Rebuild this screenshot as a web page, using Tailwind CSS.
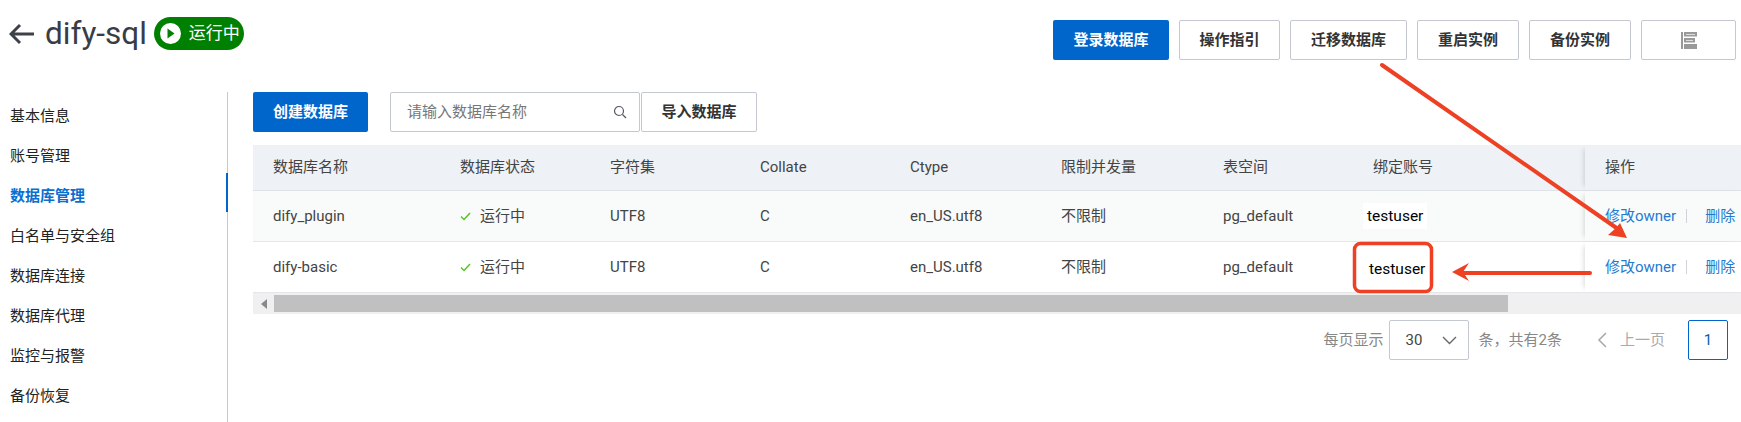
<!DOCTYPE html>
<html lang="zh-CN">
<head>
    <meta charset="UTF-8">
    <title>dify-sql</title>
    <script src="https://cdn.jsdelivr.net/npm/@tailwindcss/browser@4"></script>
</head>
<body class="relative bg-white h-[422px] overflow-hidden text-[15px] text-[#333] font-['Roboto','Noto_Sans_CJK_SC',sans-serif]">
    <!-- Header -->
    <header class="flex justify-between h-[92px] pl-[9px] pr-[5px]">
        <div class="flex items-start pt-[17px]">
            <svg class="w-[26px] h-[22px] mt-[6px]" viewBox="0 0 26 22" fill="none" stroke="#3d4149" stroke-width="3"><path d="M25 11H2M11 2l-9 9 9 9"/></svg>
            <h1 class="ml-[10px] text-[31.5px] leading-[33px] text-[#373d46]">dify-sql</h1>
            <span class="ml-[7px] flex items-center w-[90px] h-[33px] rounded-full bg-[#008000] text-white text-[17px] pl-[5px]">
                <svg class="w-[23px] h-[23px]" viewBox="0 0 23 23"><circle cx="11.5" cy="11.5" r="10.5" fill="white"/><path d="M8.5 6.5l7 5-7 5z" fill="#008000"/></svg>
                <span class="ml-[7px]">运行中</span>
            </span>
        </div>
        <div class="flex gap-[10px] pt-[20px] font-semibold">
            <button class="w-[116px] h-10 rounded-[2px] bg-[#0066cc] text-white">登录数据库</button>
            <button class="w-[101px] h-10 rounded-[2px] border border-[#c4c8d0]">操作指引</button>
            <button class="w-[117px] h-10 rounded-[2px] border border-[#c4c8d0]">迁移数据库</button>
            <button class="w-[102px] h-10 rounded-[2px] border border-[#c4c8d0]">重启实例</button>
            <button class="w-[102px] h-10 rounded-[2px] border border-[#c4c8d0]">备份实例</button>
            <button class="w-[95px] h-10 rounded-[2px] border border-[#c4c8d0] flex items-center justify-center">
                <svg class="w-4 h-[17px]" viewBox="0 0 16 17">
                    <path d="M0 0h2v17H0zM3 0h13v4.5H3zM3 6h11v4.5H3zM3 12h13v5H3z" fill="#999"/>
                    <path d="M5 2h9v1H5zM5 8h7v1H5z" fill="#ddd"/>
                </svg>
            </button>
        </div>
    </header>

    <div class="flex">
        <!-- Sidebar -->
        <nav class="w-[228px] h-[330px] shrink-0 border-r border-[#c4c8d0] pt-[4px] text-[#222]">
            <div class="h-10 flex items-center pl-[10px]">基本信息</div>
            <div class="h-10 flex items-center pl-[10px]">账号管理</div>
            <div class="relative h-10 flex items-center pl-[10px] text-[#0a6fd0] font-semibold">
                数据库管理
                <span class="absolute -right-px -top-[3px] w-[2px] h-[39px] bg-[#0066cc]"></span>
            </div>
            <div class="h-10 flex items-center pl-[10px]">白名单与安全组</div>
            <div class="h-10 flex items-center pl-[10px]">数据库连接</div>
            <div class="h-10 flex items-center pl-[10px]">数据库代理</div>
            <div class="h-10 flex items-center pl-[10px]">监控与报警</div>
            <div class="h-10 flex items-center pl-[10px]">备份恢复</div>
        </nav>

        <main class="flex-1 min-w-0 pl-[25px]">
            <!-- Toolbar -->
            <div class="flex h-10">
                <button class="w-[115px] rounded-[2px] bg-[#0066cc] text-white font-semibold">创建数据库</button>
                <div class="ml-[22px] w-[250px] rounded-[2px] border border-[#c4c8d0] flex items-center pl-4 pr-3 text-[#777]">
                    <span class="flex-1">请输入数据库名称</span>
                    <svg class="w-[14px] h-[14px]" viewBox="0 0 14 14" fill="none" stroke="#556" stroke-width="1.2"><circle cx="6" cy="6" r="4.5"/><path d="M9.5 9.5L13 13"/></svg>
                </div>
                <button class="ml-px w-[116px] rounded-[2px] border border-[#c4c8d0] font-semibold">导入数据库</button>
            </div>

            <!-- Table -->
            <div class="mt-[13px]">
                <div class="grid grid-cols-[187px_150px_150px_150px_151px_162px_150px_212px_156px] h-[46px] items-center bg-[#eef1f6] border-b border-[#dfe2e8] pl-[20px] text-[#444]">
                    <div>数据库名称</div>
                    <div>数据库状态</div>
                    <div>字符集</div>
                    <div>Collate</div>
                    <div>Ctype</div>
                    <div>限制并发量</div>
                    <div>表空间</div>
                    <div>绑定账号</div>
                    <div class="relative h-full flex items-center pl-5 shadow-[-5px_0_5px_-4px_rgba(0,0,0,0.15)]">操作</div>
                </div>
                <div class="grid grid-cols-[187px_150px_150px_150px_151px_162px_150px_212px_156px] h-[51px] items-center bg-[#f9fbfa] border-b border-[#e3e6ea] pl-[20px] text-[#444]">
                    <div>dify_plugin</div>
                    <div class="flex items-center">
                        <svg class="w-[11px] h-[9px] mr-[9px]" viewBox="0 0 11 9" fill="none" stroke="#52c41a" stroke-width="1.4"><path d="M1 4.5l3 3 6-6.5"/></svg>运行中
                    </div>
                    <div>UTF8</div>
                    <div>C</div>
                    <div>en_US.utf8</div>
                    <div>不限制</div>
                    <div>pg_default</div>
                    <div class="-ml-[10px] pt-[2px] text-black text-[15.5px]"><span class="bg-white px-1 py-1">testuser</span></div>
                    <div class="relative h-full flex items-center pl-5 bg-[#f9fbfa] text-[#1f7ad1] shadow-[-5px_0_5px_-4px_rgba(0,0,0,0.15)]">
                        <span>修改owner</span><span class="w-px h-[14px] bg-[#d0d3d8] mx-[10px]"></span><span class="ml-2">删除</span>
                    </div>
                </div>
                <div class="grid grid-cols-[187px_150px_150px_150px_151px_162px_150px_212px_156px] h-[51px] items-center bg-white border-b border-[#e3e6ea] pl-[20px] text-[#444]">
                    <div>dify-basic</div>
                    <div class="flex items-center">
                        <svg class="w-[11px] h-[9px] mr-[9px]" viewBox="0 0 11 9" fill="none" stroke="#52c41a" stroke-width="1.4"><path d="M1 4.5l3 3 6-6.5"/></svg>运行中
                    </div>
                    <div>UTF8</div>
                    <div>C</div>
                    <div>en_US.utf8</div>
                    <div>不限制</div>
                    <div>pg_default</div>
                    <div class="-ml-[4px] pt-[5px] text-black text-[15.5px]">testuser</div>
                    <div class="relative h-full flex items-center pl-5 bg-white text-[#1f7ad1] shadow-[-5px_0_5px_-4px_rgba(0,0,0,0.15)]">
                        <span>修改owner</span><span class="w-px h-[14px] bg-[#d0d3d8] mx-[10px]"></span><span class="ml-2">删除</span>
                    </div>
                </div>
                <!-- Scrollbar -->
                <div class="flex items-center h-[21px] bg-[#f0f0f0]">
                    <div class="w-[21px] flex justify-center">
                        <svg class="w-[6px] h-[10px]" viewBox="0 0 6 10" fill="#8a8a8a"><path d="M6 0v10L0 5z"/></svg>
                    </div>
                    <div class="w-[1234px] h-[17px] bg-[#c0c0c0]"></div>
                </div>
            </div>

            <!-- Pagination -->
            <div class="flex items-center justify-end h-10 mt-[6px] pr-[13px] text-[#888]">
                <span>每页显示</span>
                <div class="ml-[5px] w-[80px] h-10 rounded-[2px] border border-[#c4c8d0] flex items-center justify-between pl-4 pr-[11px] text-[#444]">
                    <span>30</span>
                    <svg class="w-[15px] h-[9px]" viewBox="0 0 15 9" fill="none" stroke="#666" stroke-width="1.4"><path d="M1 1l6.5 6.5L14 1"/></svg>
                </div>
                <span class="ml-[10px]">条，共有2条</span>
                <svg class="ml-[35px] w-[10px] h-4" viewBox="0 0 10 16" fill="none" stroke="#aaa" stroke-width="1.6"><path d="M9 1L2 8l7 7"/></svg>
                <span class="ml-[13px] text-[#aaa]">上一页</span>
                <div class="ml-[23px] w-10 h-10 rounded-[2px] border border-[#0066cc] flex items-center justify-center text-[#0a5cad]">1</div>
            </div>
        </main>
    </div>

    <!-- Red annotation overlay -->
    <svg class="absolute left-0 top-0 pointer-events-none" width="1741" height="422" fill="none">
        <path d="M1382 65L1618 229" stroke="#ee4023" stroke-width="4" stroke-linecap="round"/>
        <path d="M1627 238L1608 235L1616 228L1620 223z" fill="#ee4023"/>
        <path d="M1590 273H1462" stroke="#ee4023" stroke-width="4" stroke-linecap="round"/>
        <path d="M1452 272L1469 263L1463 272L1469 281z" fill="#ee4023"/>
        <rect x="1354.5" y="243.5" width="77" height="48" rx="6" stroke="#ee4023" stroke-width="3.5"/>
    </svg>
</body>
</html>
